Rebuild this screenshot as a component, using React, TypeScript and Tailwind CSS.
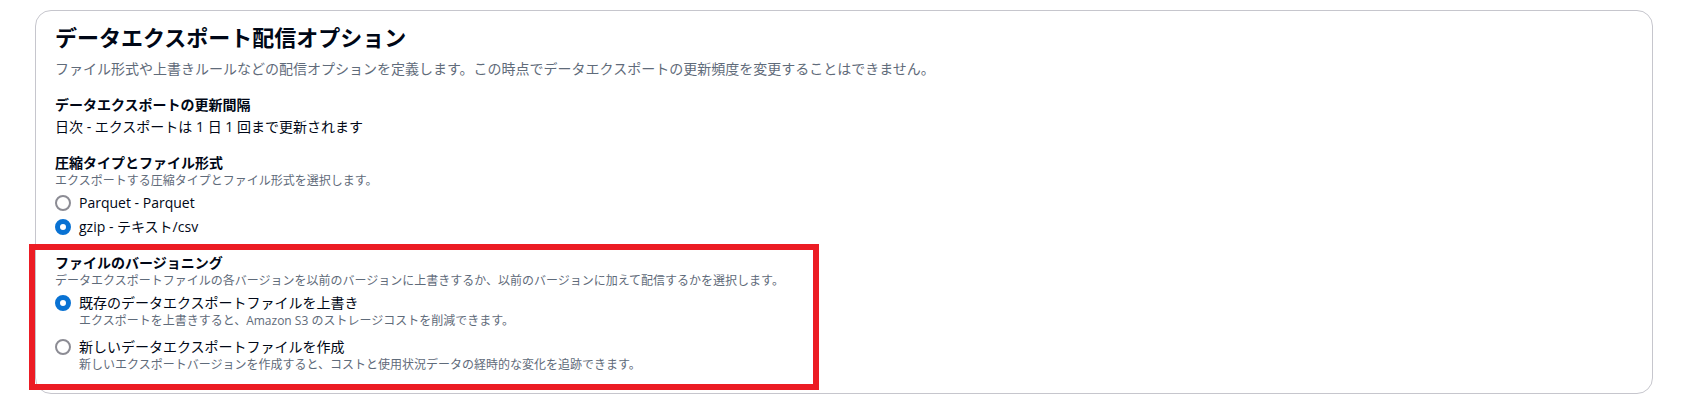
const font = {
  fontFamily: '"Open Sans", "Noto Sans CJK JP", sans-serif',
};

type RadioProps = {
  checked?: boolean;
  label: string;
  sub?: string;
};

const Radio = ({ checked, label, sub }: RadioProps) => {
  return (
    <div className="flex">
      <div className="flex h-5 w-4 items-center">
        {checked ? (
          <span className="block h-4 w-4 rounded-full border-[5px] border-[#0972d3] bg-white" />
        ) : (
          <span className="block h-4 w-4 rounded-full border-2 border-[#8c8c94] bg-white" />
        )}
      </div>
      <div className="ml-2">
        <div className="text-[14px] leading-5 text-[#000716]">{label}</div>
        {sub && (
          <div className="text-[12px] leading-4 text-[#5f6b7a]">{sub}</div>
        )}
      </div>
    </div>
  );
};

export default function App() {
  return (
    <div className="min-h-[403px] w-[1704px] bg-white" style={font}>
      <div className="ml-[35px] mt-[10px] h-[384px] w-[1618px] rounded-2xl border border-[#c6c6cd] bg-white pl-[19px] pt-[12px]">
        <h2 className="text-[22px] font-bold leading-7 text-[#000716]">
          データエクスポート配信オプション
        </h2>
        <p className="mt-2 text-[14px] leading-5 text-[#5f6b7a]">
          ファイル形式や上書きルールなどの配信オプションを定義します。この時点でデータエクスポートの更新頻度を変更することはできません。
        </p>

        <div className="mt-[15px]">
          <div className="text-[14px] font-bold leading-[22px] text-[#000716]">
            データエクスポートの更新間隔
          </div>
          <div className="text-[14px] leading-[22px] text-[#000716]">
            日次 - エクスポートは 1 日 1 回まで更新されます
          </div>
        </div>

        <div className="mt-[15px]">
          <div className="text-[14px] font-bold leading-5 text-[#000716]">
            圧縮タイプとファイル形式
          </div>
          <div className="text-[12px] leading-4 text-[#5f6b7a]">
            エクスポートする圧縮タイプとファイル形式を選択します。
          </div>
          <div className="mt-[2px] flex flex-col">
            <div className="flex h-6 items-center">
              <Radio label="Parquet - Parquet" />
            </div>
            <div className="flex h-6 items-center">
              <Radio checked label="gzip - テキスト/csv" />
            </div>
          </div>
        </div>

        <div className="-ml-[26px] mt-[5px] w-[790px] border-[6px] border-[#ec1c24] pb-[11px] pl-[20px] pt-[3px]">
          <div className="text-[14px] font-bold leading-5 text-[#000716]">
            ファイルのバージョニング
          </div>
          <div className="text-[12px] leading-4 text-[#5f6b7a]">
            データエクスポートファイルの各バージョンを以前のバージョンに上書きするか、以前のバージョンに加えて配信するかを選択します。
          </div>
          <div className="mt-1 flex flex-col gap-2">
            <Radio
              checked
              label="既存のデータエクスポートファイルを上書き"
              sub="エクスポートを上書きすると、Amazon S3 のストレージコストを削減できます。"
            />
            <Radio
              label="新しいデータエクスポートファイルを作成"
              sub="新しいエクスポートバージョンを作成すると、コストと使用状況データの経時的な変化を追跡できます。"
            />
          </div>
        </div>
      </div>
    </div>
  );
}
